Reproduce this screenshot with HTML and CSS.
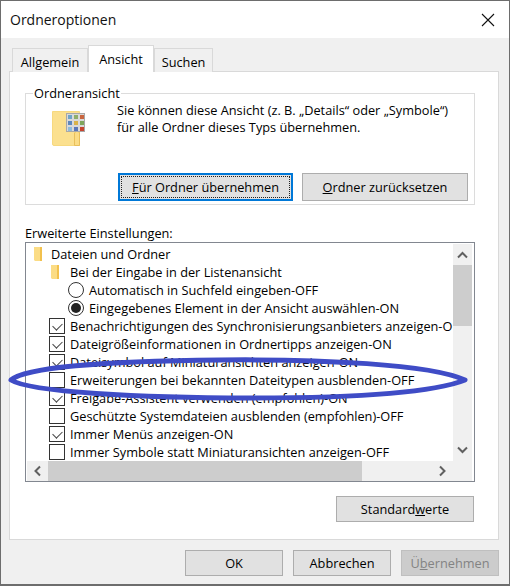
FILE: index.html
```html
<!DOCTYPE html>
<html lang="de">
<head>
<meta charset="utf-8">
<title>Ordneroptionen</title>
<link rel="stylesheet" href="styles.css">
</head>
<body>
<div class="window">
  <header class="titlebar">
    <span class="title">Ordneroptionen</span>
    <svg class="close" width="14" height="14" viewBox="0 0 14 14"><path d="M1 1 13 13M13 1 1 13" stroke="#111" stroke-width="1.1" fill="none"/></svg>
  </header>
  <main class="body">
    <nav class="tabs">
      <span class="tab tab-allgemein">Allgemein</span>
      <span class="tab tab-active">Ansicht</span>
      <span class="tab tab-suchen">Suchen</span>
    </nav>
    <section class="panel">
      <fieldset class="group">
        <legend>Ordneransicht</legend>
        <div class="group-top">
          <svg class="bigfolder" width="36" height="38" viewBox="0 0 36 38">
            <path d="M1.500 1.500h27v34H3A1.500 1.500 0 0 1 1.500 34z" fill="#fbe08f" stroke="#f7d97f"/>
            <path d="M23.500 35.500V23l3-3 2 3v12.500z" fill="#fbdc85" stroke="#e9bf5a"/>
            <rect x="15.500" y="3.500" width="18" height="18" fill="#d9d9d9" stroke="#a8a8a8"/>
            <rect x="17" y="5" width="4" height="4" fill="#6fa3c8"/><rect x="23" y="5" width="4" height="4" fill="#8fae6a"/><rect x="29" y="5" width="4" height="4" fill="#c9653f"/>
            <rect x="17" y="11" width="4" height="4" fill="#5d87bd"/><rect x="23" y="11" width="4" height="4" fill="#d8b24a"/><rect x="29" y="11" width="4" height="4" fill="#7fa65c"/>
            <rect x="17" y="17" width="4" height="4" fill="#8fbbdb"/><rect x="23" y="17" width="4" height="4" fill="#5a77b8"/><rect x="29" y="17" width="4" height="4" fill="#c8442f"/>
          </svg>
          <p class="group-text">Sie können diese Ansicht (z. B. „Details“ oder „Symbole“)<br>für alle Ordner dieses Typs übernehmen.</p>
        </div>
        <div class="group-buttons">
          <button class="btn btn-default"><span class="focus"><u>F</u>ür Ordner übernehmen</span></button>
          <button class="btn btn-reset"><u>O</u>rdner zurücksetzen</button>
        </div>
      </fieldset>
      <div class="adv-label">Erweiterte Einstellungen:</div>
      <div class="listbox">
        <div class="rows">
          <div class="row lvl0"><svg class="fold" width="16" height="16" viewBox="0 0 16 16"><path d="M2 1h6v14H3l-1-1z" fill="#fbdc85"/><path d="M8 1h2v14H8z" fill="#f2c14e"/></svg>Dateien und Ordner</div>
          <div class="row lvl1"><svg class="fold" width="16" height="16" viewBox="0 0 16 16"><path d="M2 1h6v14H3l-1-1z" fill="#fbdc85"/><path d="M8 1h2v14H8z" fill="#f2c14e"/></svg>Bei der Eingabe in der Listenansicht</div>
          <div class="row lvl2"><span class="radio"></span>Automatisch in Suchfeld eingeben-OFF</div>
          <div class="row lvl2"><span class="radio radio-on"></span>Eingegebenes Element in der Ansicht auswählen-ON</div>
          <div class="row lvl1"><span class="check on"></span>Benachrichtigungen des Synchronisierungsanbieters anzeigen-ON</div>
          <div class="row lvl1"><span class="check on"></span>Dateigrößeinformationen in Ordnertipps anzeigen-ON</div>
          <div class="row lvl1"><span class="check on"></span>Dateisymbol auf Miniaturansichten anzeigen-ON</div>
          <div class="row lvl1"><span class="check"></span>Erweiterungen bei bekannten Dateitypen ausblenden-OFF</div>
          <div class="row lvl1"><span class="check on"></span>Freigabe-Assistent verwenden (empfohlen)-ON</div>
          <div class="row lvl1"><span class="check"></span>Geschützte Systemdateien ausblenden (empfohlen)-OFF</div>
          <div class="row lvl1"><span class="check on"></span>Immer Menüs anzeigen-ON</div>
          <div class="row lvl1"><span class="check"></span>Immer Symbole statt Miniaturansichten anzeigen-OFF</div>
        </div>
        <div class="vscroll">
          <svg width="19" height="21" viewBox="0 0 19 21"><path d="M5 13.500 9.500 9l4.500 4.500" fill="none" stroke="#606060" stroke-width="2"/></svg>
          <div class="vtrack"><div class="vthumb"></div></div>
          <svg width="19" height="20" viewBox="0 0 19 20"><path d="M5 6.500 9.500 11 14 6.500" fill="none" stroke="#606060" stroke-width="2"/></svg>
        </div>
        <div class="hscroll">
          <svg width="21" height="20" viewBox="0 0 21 20"><path d="M13 5.500 8.500 10l4.500 4.500" fill="none" stroke="#606060" stroke-width="2"/></svg>
          <div class="htrack"><div class="hthumb"></div></div>
          <svg width="21" height="20" viewBox="0 0 21 20"><path d="M8 5.500 12.500 10 8 14.500" fill="none" stroke="#606060" stroke-width="2"/></svg>
        </div>
        <div class="corner"></div>
      </div>
      <div class="panel-foot"><button class="btn btn-std">Standard<u>w</u>erte</button></div>
    </section>
    <footer class="actions">
      <button class="btn btn-act">OK</button>
      <button class="btn btn-act">Abbrechen</button>
      <button class="btn btn-act btn-off">Ü<u>b</u>ernehmen</button>
    </footer>
  </main>
  <svg class="scribble" width="510" height="586" viewBox="0 0 510 586">
    <path d="M11 380C25 368 100 361 220 360C320 359 430 364 465 380C430 394 340 398 250 398C140 398 30 392 11 380Z" fill="none" stroke="#3f4cc6" stroke-width="5" stroke-linejoin="round"/>
  </svg>
</div>
</body>
</html>
```
FILE: styles.css
```css
* { box-sizing: border-box; }
html, body { margin: 0; padding: 0; }
body { width: 510px; height: 586px; overflow: hidden; font-family: "Open Sans", "Liberation Sans", sans-serif; font-size: 12.75px; color: #000; }
.window { position: relative; width: 510px; height: 586px; border: 1px solid #6d6d6d; border-bottom-width: 2px; background: #f0f0f0; display: flex; flex-direction: column; }
.titlebar { height: 37px; flex: none; background: #fff; display: flex; align-items: center; justify-content: space-between; padding: 0 14px 0 9px; }
.title { font-size: 14px; color: #111; }
.close { margin-top: 1px; }
.body { flex: 1; display: flex; flex-direction: column; padding: 0 10px 0 8px; }
.tabs { height: 34px; display: flex; align-items: flex-end; padding-left: 3px; position: relative; z-index: 1; margin-bottom: -1px; }
.tab { height: 24px; background: #f0f0f0; border: 1px solid #d9d9d9; border-bottom: none; display: flex; align-items: center; justify-content: center; padding-top: 2px; }
.tab-allgemein { width: 76px; }
.tab-suchen { width: 59px; }
.tab-active { width: 66px; height: 27px; background: #fff; padding-top: 0; padding-bottom: 1px; }
.panel { width: 490px; height: 469px; background: #fff; border: 1px solid #d9d9d9; padding: 13px 22px 0 15px; display: flex; flex-direction: column; }
.group { margin: 0; padding: 0; width: 450px; height: 120px; border: 1px solid #dcdcdc; min-inline-size: 0; display: flex; flex-direction: column; flex: none; position: relative; }
.group legend { margin-left: 7px; padding: 0 1px; line-height: 16px; }
.group-top { display: flex; height: 72px; padding-left: 25px; }
.bigfolder { margin-top: 9px; flex: none; }
.group-text { margin: 1px 0 0 30px; line-height: 17px; }
.group-buttons { display: flex; gap: 9px; padding-left: 92px; }
.btn { font: inherit; color: #000; background: #e1e1e1; border: 1px solid #adadad; padding: 0; height: 28px; display: flex; align-items: center; justify-content: center; }
.btn-default { width: 175px; border: 2px solid #0078d7; padding: 1px; }
.focus { flex: 1; height: 100%; border: 1px dotted #222; display: flex; align-items: center; justify-content: center; white-space: pre; }
.btn-reset { width: 166px; }
.adv-label { margin-top: 20px; line-height: 16px; }
.listbox { margin-top: 1px; width: 450px; height: 240px; border: 1px solid #828790; padding: 1px; display: grid; grid-template-columns: 426px 19px; grid-template-rows: 217px 20px; flex: none; }
.rows { overflow: hidden; padding-top: 1px; }
.row { height: 18px; display: flex; align-items: center; white-space: nowrap; }
.lvl0 { padding-left: 5px; }
.lvl1 { padding-left: 22px; }
.lvl2 { padding-left: 41px; }
.fold { flex: none; margin-right: 3px; }
.lvl1 .fold { margin-right: 5px; }
.check { width: 16px; height: 16px; flex: none; border: 1px solid #333; margin-right: 5px; background: #fff; position: relative; }
.check.on::after { content: ""; position: absolute; left: 3px; top: 2px; width: 8px; height: 5px; border-left: 1px solid #444; border-bottom: 1px solid #444; transform: rotate(-45deg) translate(-1px, 1px); }
.radio { width: 16px; height: 16px; flex: none; border: 1px solid #333; border-radius: 50%; margin-right: 5px; background: #fff; position: relative; }
.radio-on::after { content: ""; position: absolute; left: 2px; top: 2px; width: 10px; height: 10px; border-radius: 50%; background: #222; }
.vscroll { background: #f0f0f0; display: flex; flex-direction: column; }
.vtrack { flex: 1; }
.vthumb { height: 61px; background: #cdcdcd; }
.hscroll { background: #f0f0f0; display: flex; }
.htrack { flex: 1; }
.hthumb { width: 314px; height: 100%; background: #cdcdcd; }
.corner { background: #f0f0f0; }
.panel-foot { display: flex; justify-content: flex-end; padding-right: 2px; margin-top: 14px; }
.btn-std { width: 138px; height: 26px; }
.actions { display: flex; justify-content: flex-end; gap: 10px; padding-top: 10px; }
.btn-act { width: 98px; height: 26px; }
.btn-off { background: #ccc; border-color: #bfbfbf; color: #838383; }
.scribble { position: absolute; left: -1px; top: -1px; pointer-events: none; }
```
